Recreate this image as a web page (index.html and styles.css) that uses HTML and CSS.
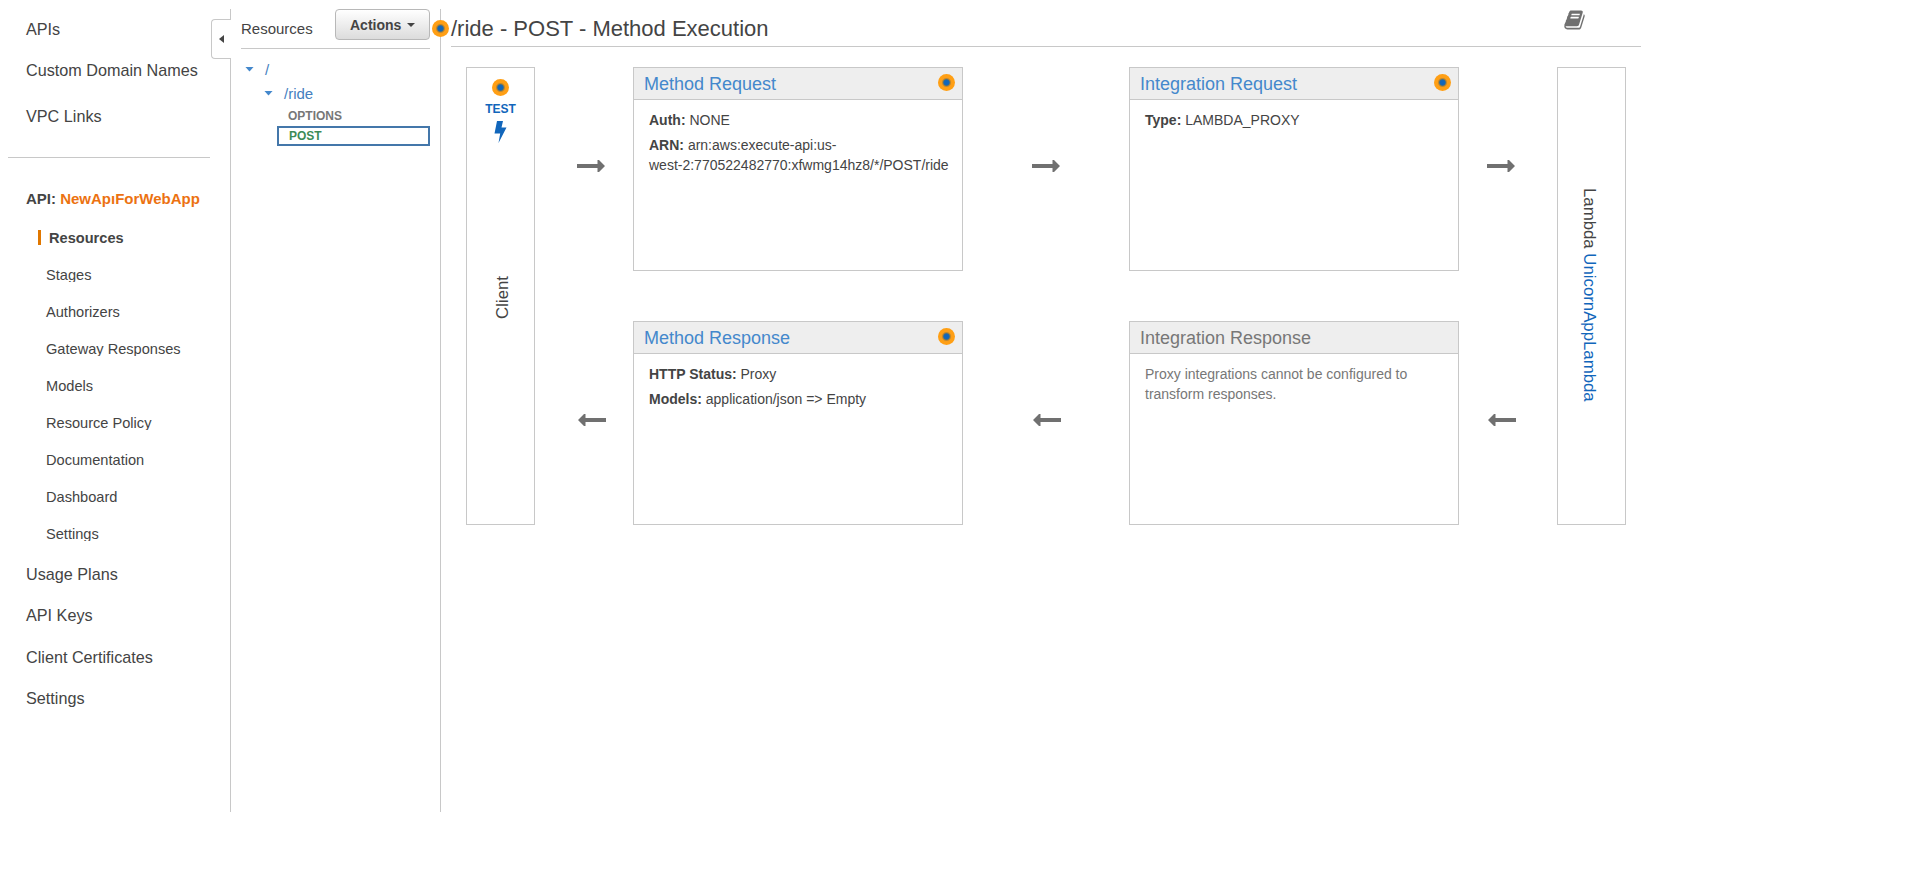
FILE: index.html
```html
<!DOCTYPE html>
<html lang="en">
<head>
<meta charset="utf-8">
<title>API Gateway</title>
<link rel="stylesheet" href="styles.css">
</head>
<body>
<svg class="defs" width="0" height="0">
  <symbol id="arrow-right" viewBox="0 0 28 12"><path d="M0 4h20.500V0h1.500L28 6l-6 6h-1.500V8H0z"/></symbol>
  <symbol id="arrow-left" viewBox="0 0 28 12"><path d="M28 4H7.500V0H6L0 6l6 6h1.500V8H28z"/></symbol>
</svg>
<div class="app">
  <nav class="sidebar">
    <button class="toggle" aria-label="Collapse"><span class="tri-left"></span></button>
    <a class="item">APIs</a>
    <a class="item domain">Custom Domain Names</a>
    <a class="item vpc">VPC Links</a>
    <hr class="nav-rule">
    <div class="api-name">API: <span>NewApıForWebApp</span></div>
    <div class="subnav">
      <a class="sub active">Resources</a>
      <a class="sub">Stages</a>
      <a class="sub">Authorizers</a>
      <a class="sub">Gateway Responses</a>
      <a class="sub">Models</a>
      <a class="sub">Resource Policy</a>
      <a class="sub">Documentation</a>
      <a class="sub">Dashboard</a>
      <a class="sub">Settings</a>
    </div>
    <a class="item">Usage Plans</a>
    <a class="item keys">API Keys</a>
    <a class="item certs">Client Certificates</a>
    <a class="item settings">Settings</a>
  </nav>
  <section class="resources">
    <i class="dot on-edge"></i>
    <header class="res-head">
      <span>Resources</span>
      <button class="actions">Actions<span class="caret"></span></button>
    </header>
    <div class="tree">
      <div class="node root"><span class="tri-down"></span>/</div>
      <div class="node child"><span class="tri-down"></span>/ride</div>
      <div class="method options">OPTIONS</div>
      <div class="method post">POST</div>
    </div>
  </section>
  <main class="main">
    <header class="title">
      <h1>/ride - POST - Method Execution</h1>
      <svg class="book" viewBox="0 0 1664 1792"><path d="M1639 478q40 57 18 129l-275 906q-19 64-76.500 107.500T1183 1664H260q-77 0-148.500-53.500T12 1479q-24-67-2-127 0-4 3-27t4-37q1-8-3-21.500t-3-19.500q2-11 8-21t16.500-23.500T52 1179q23-38 45-91.500t30-91.500q3-10 .5-30t-.5-28q3-11 17-28t17-23q21-36 42-92t25-90q1-9-2.500-32t.5-28q4-13 22-30.500t22-22.500q19-26 42.500-84.500T340 411q1-8-3-25.500t-2-26.500q2-8 9-18t18-23 17-21q8-12 16.500-30.500t15-35 16-36 19.500-32 26.500-23.500 36-11.500T556 123l-1 3q38-9 51-9h761q74 0 114 56t18 130l-274 906q-36 119-71.500 153.500T1025 1397H156q-27 0-38 15-11 16-1 43 24 70 144 70h923q29 0 56-15.500t35-41.500l300-987q7-22 5-57 38 15 59 43zm-1064 2q-4 13 2 22.500t20 9.500h608q13 0 25.500-9.500T1247 480l21-64q4-13-2-22.500t-20-9.500H638q-13 0-25.500 9.500T596 416zm-83 256q-4 13 2 22.500t20 9.500h608q13 0 25.500-9.500T1164 736l21-64q4-13-2-22.500t-20-9.500H555q-13 0-25.500 9.500T513 672z"/></svg>
    </header>
    <div class="flow">
      <div class="endpoint client">
        <i class="dot"></i>
        <span class="test">TEST</span>
        <svg class="bolt" viewBox="0 0 13 22"><path d="M3 0H9L7.500 6.500H12.500L4.500 22 6.200 12.500H.5z"/></svg>
        <span class="vertical up">Client</span>
      </div>
      <div class="arrows a1"><svg><use href="#arrow-right"/></svg><svg><use href="#arrow-left"/></svg></div>
      <div class="column">
        <section class="card">
          <h2>Method Request<i class="dot"></i></h2>
          <p><b>Auth:</b> NONE</p>
          <p><b>ARN:</b> arn:aws:execute-api:us-<br>west-2:770522482770:xfwmg14hz8/*/POST/ride</p>
        </section>
        <section class="card">
          <h2>Method Response<i class="dot"></i></h2>
          <p><b>HTTP Status:</b> Proxy</p>
          <p><b>Models:</b> application/json =&gt; Empty</p>
        </section>
      </div>
      <div class="arrows a2"><svg><use href="#arrow-right"/></svg><svg><use href="#arrow-left"/></svg></div>
      <div class="column">
        <section class="card">
          <h2>Integration Request<i class="dot"></i></h2>
          <p><b>Type:</b> LAMBDA_PROXY</p>
        </section>
        <section class="card disabled">
          <h2>Integration Response</h2>
          <p>Proxy integrations cannot be configured to<br>transform responses.</p>
        </section>
      </div>
      <div class="arrows a3"><svg><use href="#arrow-right"/></svg><svg><use href="#arrow-left"/></svg></div>
      <div class="endpoint lambda">
        <span class="vertical">Lambda <a>UnicornAppLambda</a></span>
      </div>
    </div>
  </main>
</div>
</body>
</html>
```
FILE: styles.css
```css
* { box-sizing: border-box; }
body {
  margin: 0;
  background: #fff;
  color: #444;
  font-family: "Liberation Sans", Arial, sans-serif;
  font-size: 14px;
}
h1, h2, p, hr { margin: 0; font-weight: normal; }
.defs { position: absolute; }
.app { display: flex; height: 812px; padding-top: 9px; }

.sidebar {
  position: relative;
  width: 231px;
  border-right: 1px solid #c8c8c8;
  padding: 11px 0 0 26px;
}
.toggle {
  position: absolute;
  top: 10px;
  right: -1px;
  width: 20px;
  height: 40px;
  padding: 0 7px 0 0;
  display: flex;
  align-items: center;
  justify-content: flex-end;
  background: #fff;
  border: 1px solid #c8c8c8;
  border-right: 0;
  border-radius: 4px 0 0 4px;
}
.tri-left {
  border: 4px solid transparent;
  border-left-width: 0;
  border-right: 5px solid #444;
}
.item { display: block; padding-bottom: 2px; font-size: 16.200px; line-height: 18px; }
.domain { margin-top: 21px; }
.vpc { margin-top: 26px; }
.nav-rule { width: 202px; margin: 30px 0 0 -18px; border: 0; border-top: 1px solid #c8c8c8; }
.api-name { margin-top: 31px; font-size: 15px; font-weight: bold; line-height: 20px; }
.api-name span { color: #ec7211; }
.subnav { padding: 21px 0 24px 12px; display: flex; flex-direction: column; gap: 22px; }
.sub {
  height: 15px;
  padding-left: 8px;
  font-size: 14.600px;
  line-height: 16px;
  overflow: hidden;
}
.sub.active { border-left: 3px solid #e07700; font-weight: bold; }
.keys { margin-top: 21px; }
.certs { margin-top: 22px; }
.settings { margin-top: 21px; }

.resources {
  position: relative;
  width: 210px;
  border-right: 1px solid #c8c8c8;
  padding: 0 10px;
}
.dot {
  width: 17px;
  height: 17px;
  border-radius: 50%;
  background: radial-gradient(circle, #1166bb 0 2px, #2b6a9c 2.800px, #b5832e 3.800px, #f99d1b 5px, #ff9f14 6px);
}
.on-edge { position: absolute; top: 11px; right: -9px; z-index: 1; }
.res-head {
  display: flex;
  justify-content: space-between;
  height: 40px;
  border-bottom: 1px solid #c8c8c8;
  font-size: 15px;
  line-height: 40px;
}
.actions {
  display: flex;
  align-items: center;
  gap: 6px;
  width: 95px;
  height: 31px;
  padding: 0 0 0 14px;
  border: 1px solid #b8b8b8;
  border-radius: 4px;
  background: linear-gradient(#fff, #dcdcdc);
  color: #444;
  font: bold 14px "Liberation Sans", Arial, sans-serif;
}
.caret { border: 4px solid transparent; border-top-color: #444; border-bottom: 0; }
.tree { padding-top: 8px; color: #4480c0; }
.node { display: flex; align-items: center; gap: 11px; height: 24px; font-size: 15px; }
.root { padding-left: 4px; }
.child { padding-left: 23px; }
.tri-down { width: 9px; height: 5px; background: #4488cc; clip-path: polygon(0 0, 100% 0, 50% 100%); }
.method { font-size: 12px; font-weight: bold; }
.options { padding: 1px 0 0 47px; height: 21px; line-height: 20px; color: #777; }
.post {
  margin-left: 36px;
  height: 20px;
  border: 2px solid #4477aa;
  padding-left: 10px;
  line-height: 16px;
  color: #3d8b57;
}

.main { width: 1200px; padding-left: 10px; }
.title {
  display: flex;
  justify-content: space-between;
  height: 38px;
  padding-right: 56px;
  border-bottom: 1px solid #c8c8c8;
}
.title h1 { font-size: 22px; line-height: 40px; }
.book { width: 21px; height: 22px; fill: #707070; }
.flow { display: flex; padding: 20px 0 0 15px; }
.endpoint {
  display: flex;
  flex-direction: column;
  align-items: center;
  width: 69px;
  height: 458px;
  border: 1px solid #c8c8c8;
}
.client { padding-top: 11px; }
.test { margin-top: 5px; font-size: 12px; line-height: 16px; font-weight: bold; color: #1166bb; }
.bolt { width: 13px; height: 22px; margin-top: 4px; fill: #1166bb; }
.vertical { writing-mode: vertical-rl; font-size: 16.800px; line-height: 20px; }
.vertical a { color: #1166bb; }
.up { transform: rotate(180deg); margin: 133px 0 0 4px; }
.lambda { padding: 120px 5px 0 0; }
.arrows { display: flex; flex-direction: column; gap: 242px; padding-top: 93px; }
.arrows svg { width: 28px; height: 12px; fill: #707070; }
.arrows svg:last-child { margin-left: 1px; }
.a1 { width: 98px; padding-left: 42px; }
.a2 { width: 166px; padding-left: 69px; }
.a3 { width: 98px; padding-left: 27.500px; }
.column { display: flex; flex-direction: column; gap: 50px; }
.card { width: 330px; height: 204px; border: 1px solid #c8c8c8; }
.card h2 {
  display: flex;
  justify-content: space-between;
  height: 32px;
  margin-bottom: 10px;
  padding: 0 7px 0 10px;
  background: #eee;
  border-bottom: 1px solid #c8c8c8;
  color: #4488cc;
  font-size: 18px;
  line-height: 32px;
}
.card .dot { margin-top: 6px; }
.card p { margin: 0 0 5px 15px; line-height: 20px; white-space: nowrap; }
.card.disabled h2, .card.disabled p { color: #777; }
```
